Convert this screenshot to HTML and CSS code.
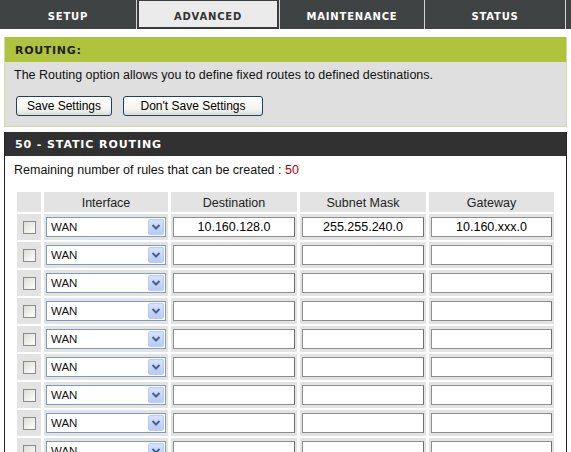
FILE: index.html
```html
<!DOCTYPE html>
<html lang="en">
<head>
  <meta charset="UTF-8" />
  <title>Advanced - Routing</title>
  <link rel="stylesheet" href="styles.css">
</head>
<body>
  <div class="tabs">
    <div class="tab tab-setup">SETUP</div>
    <div class="tab tab-advanced active">ADVANCED</div>
    <div class="tab tab-maint">MAINTENANCE</div>
    <div class="tab tab-status">STATUS</div>
    <div class="tab-rest"></div>
  </div>

  <div class="box routing">
    <h3 class="box-head">ROUTING:</h3>
    <div class="box-body">
      <p>The Routing option allows you to define fixed routes to defined destinations.</p>
      <div class="buttons">
        <button class="btn btn-save">Save Settings</button>
        <button class="btn btn-nosave">Don't Save Settings</button>
      </div>
    </div>
  </div>

  <div class="box static">
    <h3 class="box-head">50 - STATIC ROUTING</h3>
    <div class="box-body">
      <p>Remaining number of rules that can be created : <span class="count">50</span></p>

      <div class="rules" id="rules">
        <div class="cell head"></div>
        <div class="cell head">Interface</div>
        <div class="cell head">Destination</div>
        <div class="cell head">Subnet Mask</div>
        <div class="cell head">Gateway</div>
      </div>
    </div>
  </div>

  <script>
    const rules = [
      { iface: "WAN", dest: "10.160.128.0", mask: "255.255.240.0", gw: "10.160.xxx.0" }
    ];

    const arrow = `<span class="drop"><svg width="10" height="8" viewBox="0 0 10 8"><path d="M1.5 2 L5 5.5 L8.5 2" fill="none" stroke="#4a5f8a" stroke-width="2"/></svg></span>`;

    const table = document.getElementById("rules");
    for (let i = 0; i < 9; i++) {
      const r = rules[i] || { iface: "WAN", dest: "", mask: "", gw: "" };
      table.innerHTML += `
        <div class="cell"><input type="checkbox" class="chk"></div>
        <div class="cell"><div class="select"><span>${r.iface}</span>${arrow}</div></div>
        <div class="cell"><input type="text" class="ip" value="${r.dest}"></div>
        <div class="cell"><input type="text" class="ip" value="${r.mask}"></div>
        <div class="cell"><input type="text" class="ip" value="${r.gw}"></div>
      `;
    }
  </script>
</body>
</html>
```

FILE: styles.css
```css
html {
  overflow: hidden;
}

body {
  font-family: "Liberation Sans", Arial, sans-serif;
  font-size: 12.5px;
  margin: 0;
  padding: 0;
  background: #ffffff;
  color: #111;
}

/* top navigation */
.tabs {
  display: flex;
  height: 29px;
  background: #404343;
}

.tab {
  display: flex;
  align-items: center;
  justify-content: center;
  padding-top: 3px;
  box-sizing: border-box;
  border-right: 1px solid #d4d4d4;
  color: #ffffff;
  font: bold 10px "DejaVu Sans", Verdana, sans-serif;
  letter-spacing: 0.8px;
}

.tab-setup { width: 137px; }
.tab-advanced { width: 143px; }
.tab-maint { width: 145px; }
.tab-status { width: 141px; }

.tab.active {
  background: #ebebeb;
  color: #333;
  box-shadow: inset 2px 1px 0 #3a3d3d, inset -2px -2px 0 #3a3d3d;
}

.tab-rest {
  flex: 1;
}

/* boxes */
.box {
  margin: 0 4px;
}

.box-head {
  margin: 0;
  padding-left: 10px;
  font: bold 11px "DejaVu Sans", Verdana, sans-serif;
}

.box p {
  margin: 0;
  line-height: 14px;
}

.routing {
  margin-top: 8px;
  border: 1px solid #d3d8a4;
  border-top: none;
}

.routing .box-head {
  height: 25px;
  line-height: 28px;
  background: #afc33c;
  color: #1e1e1e;
  letter-spacing: 0.7px;
}

.routing .box-body {
  background: #dfdfdf;
  padding: 6px 10px 10px 9px;
}

.buttons {
  display: flex;
  gap: 11px;
  margin-top: 14px;
  margin-left: 2px;
}

.btn {
  height: 20px;
  padding: 0;
  font-family: "Liberation Sans", Arial, sans-serif;
  font-size: 12px;
  color: #000;
  border: 1px solid #1d3f6e;
  border-radius: 3px;
  background: linear-gradient(#ffffff, #f3f3ee 70%, #dedbd0);
}

.btn-save { width: 96px; }
.btn-nosave { width: 140px; }

.static {
  margin-top: 5px;
  border-left: 1px solid #222;
  border-right: 1px solid #222;
}

.static .box-head {
  height: 24px;
  line-height: 26px;
  background: #313131;
  color: #ffffff;
  letter-spacing: 0.9px;
}

.static .box-body {
  padding: 7px 10px 0 9px;
}

.count {
  color: #b00000;
}

/* rules table */
.rules {
  display: grid;
  grid-template-columns: 24px 124px 126px 126px 125px;
  grid-auto-rows: 26px;
  grid-template-rows: 20px;
  column-gap: 3px;
  row-gap: 2px;
  margin: 15px 0 0 3px;
}

.cell {
  display: flex;
  align-items: center;
  justify-content: center;
  padding: 0 2px;
  background: #e3e3e3;
}

.cell.head {
  color: #222;
  padding-top: 1px;
}

.chk {
  appearance: none;
  width: 13px;
  height: 13px;
  margin: 0 0 0 1px;
  border: 1px solid #8a8a8a;
  background: linear-gradient(135deg, #dcdcd6, #ffffff);
}

.select {
  display: flex;
  align-items: center;
  justify-content: space-between;
  width: 100%;
  height: 20px;
  box-sizing: border-box;
  border: 1px solid #7f9db9;
  background: #ffffff;
  font-size: 11.5px;
  padding: 0 1px 0 4px;
}

.drop {
  display: flex;
  align-items: center;
  justify-content: center;
  width: 16px;
  height: 16px;
  border: 1px solid #b9cbf3;
  border-radius: 2px;
  box-sizing: border-box;
  background: linear-gradient(#d6e2fd, #b7cbf6);
}

.ip {
  width: 100%;
  height: 20px;
  box-sizing: border-box;
  margin: 0;
  border: 1px solid #8e8e8e;
  border-right-color: #6f6f6f;
  background: #ffffff;
  font-family: "Liberation Sans", Arial, sans-serif;
  font-size: 12.5px;
  text-align: center;
  color: #000;
  padding: 0;
}
```
